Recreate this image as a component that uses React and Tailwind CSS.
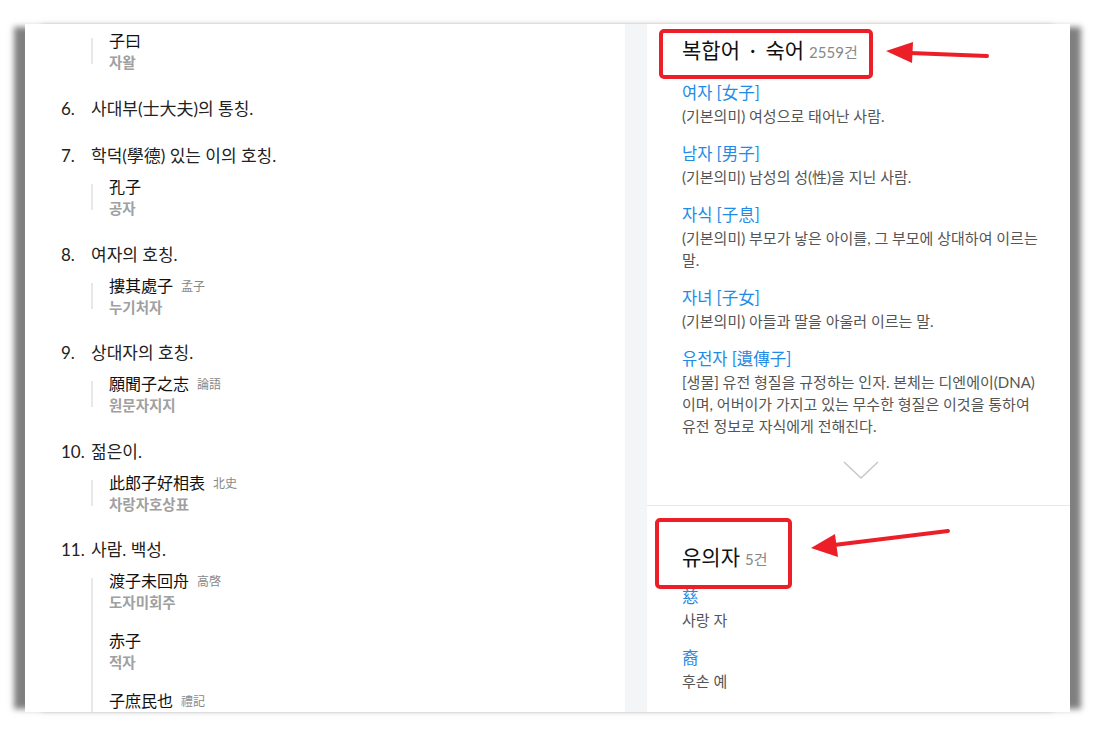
import React from 'react';

const meanings = [
  { examples: [{ han: '子曰', read: '자왈' }] },
  { no: '6.', text: '사대부(士大夫)의 통칭.' },
  { no: '7.', text: '학덕(學德) 있는 이의 호칭.', examples: [{ han: '孔子', read: '공자' }] },
  { no: '8.', text: '여자의 호칭.', examples: [{ han: '摟其處子', src: '孟子', read: '누기처자' }] },
  { no: '9.', text: '상대자의 호칭.', examples: [{ han: '願聞子之志', src: '論語', read: '원문자지지' }] },
  { no: '10.', text: '젊은이.', examples: [{ han: '此郎子好相表', src: '北史', read: '차랑자호상표' }] },
  {
    no: '11.',
    text: '사람. 백성.',
    examples: [
      { han: '渡子未回舟', src: '高啓', read: '도자미회주' },
      { han: '赤子', read: '적자' },
      { han: '子庶民也', src: '禮記', read: '자서민야' },
    ],
  },
];

const compounds = [
  { word: '여자 [女子]', desc: '(기본의미) 여성으로 태어난 사람.' },
  { word: '남자 [男子]', desc: '(기본의미) 남성의 성(性)을 지닌 사람.' },
  { word: '자식 [子息]', desc: '(기본의미) 부모가 낳은 아이를, 그 부모에 상대하여 이르는 말.' },
  { word: '자녀 [子女]', desc: '(기본의미) 아들과 딸을 아울러 이르는 말.' },
  {
    word: '유전자 [遺傳子]',
    desc: '[생물] 유전 형질을 규정하는 인자. 본체는 디엔에이(DNA)이며, 어버이가 가지고 있는 무수한 형질은 이것을 통하여 유전 정보로 자식에게 전해진다.',
  },
];

const synonyms = [
  { word: '慈', desc: '사랑 자' },
  { word: '裔', desc: '후손 예' },
];

const Examples = ({ items }) => (
  <div className="flex">
    <div className="w-[2px] bg-[#e8e8e8] my-[9px] shrink-0" />
    <div className="pl-4 flex flex-col gap-[16px]">
      {items.map((ex, i) => (
        <div key={i}>
          <div className="h-[24px] flex items-center text-[16px] text-[#111]">
            <span>{ex.han}</span>
            {ex.src && <span className="ml-2 mt-[2px] text-[12px] leading-none text-[#888]">{ex.src}</span>}
          </div>
          <div className="text-[14.5px] leading-[20px] font-semibold text-[#a0a0a0]">{ex.read}</div>
        </div>
      ))}
    </div>
  </div>
);

const Entry = ({ word, desc }) => (
  <div>
    <div className="text-[16.5px] leading-[24px] text-[#1e8ce6]">{word}</div>
    <div className="text-[15px] leading-[22px] text-[#555]">{desc}</div>
  </div>
);

export default function App() {
  return (
    <div className="relative w-[1094px] h-[738px] bg-white overflow-hidden font-[Lato,'Noto_Sans_CJK_KR',sans-serif]">
      <div className="ml-[25px] mt-[24px] w-[1045px] h-[688px] flex bg-white shadow-[-14px_0_6px_-3px_rgba(0,0,0,0.5),14px_0_6px_-3px_rgba(0,0,0,0.5)]">
        {/* meanings */}
        <div className="w-[600px] pl-[36px] pt-[5px] flex flex-col gap-[23.5px] overflow-hidden">
          {meanings.map((m, i) => (
            <div key={i}>
              {m.no && (
                <div className="flex h-[24px] items-center text-[17px] text-[#222]">
                  <span className="w-[30px] shrink-0">{m.no}</span>
                  <span>{m.text}</span>
                </div>
              )}
              {m.examples && (
                <div className={m.no ? 'ml-[30px] mt-[7px]' : 'ml-[30px]'}>
                  <Examples items={m.examples} />
                </div>
              )}
            </div>
          ))}
        </div>

        <div className="w-[22px] bg-[#f4f5f7] shrink-0" />

        {/* side panel */}
        <div className="flex-1 flex flex-col overflow-hidden">
          <section className="pt-[12px] pl-[35px] pr-[30px] pb-[26px] border-b border-[#e8e8e8]">
            <h2 className="text-[21px] leading-[28px] text-[#111] font-normal">
              복합어<span className="mx-[10px]">·</span>숙어
              <span className="ml-[5px] text-[15px] text-[#888]">2559건</span>
            </h2>
            <div className="mt-[15px] flex flex-col gap-[15px]">
              {compounds.map((c, i) => (
                <Entry key={i} {...c} />
              ))}
            </div>
            <div className="mt-[24px] flex justify-center">
              <svg width="36" height="18" viewBox="0 0 36 18" fill="none">
                <polyline points="1,1 18,17 35,1" stroke="#c8c8c8" strokeWidth="1.5" />
              </svg>
            </div>
          </section>
          <section className="pt-[37px] pl-[35px] pr-[30px]">
            <h2 className="text-[21px] leading-[28px] text-[#111] font-normal">
              유의자<span className="ml-[5px] text-[15px] text-[#888]">5건</span>
            </h2>
            <div className="mt-[12px] flex flex-col gap-[15px]">
              {synonyms.map((s, i) => (
                <Entry key={i} {...s} />
              ))}
            </div>
          </section>
        </div>
      </div>

      {/* annotation overlay */}
      <svg className="absolute top-0 left-0 pointer-events-none" width="1094" height="738">
        <rect x="661" y="31" width="210" height="46" rx="3" fill="none" stroke="#ec1f28" strokeWidth="4" />
        <line x1="910" y1="53" x2="987" y2="56" stroke="#ec1f28" strokeWidth="4" strokeLinecap="round" />
        <polygon points="886,51 913,42 912,63" fill="#ec1f28" />
        <rect x="657" y="520" width="133" height="67" rx="3" fill="none" stroke="#ec1f28" strokeWidth="4" />
        <line x1="834" y1="545" x2="948" y2="531" stroke="#ec1f28" strokeWidth="4" strokeLinecap="round" />
        <polygon points="811,548 835,534 838,557" fill="#ec1f28" />
      </svg>
    </div>
  );
}
